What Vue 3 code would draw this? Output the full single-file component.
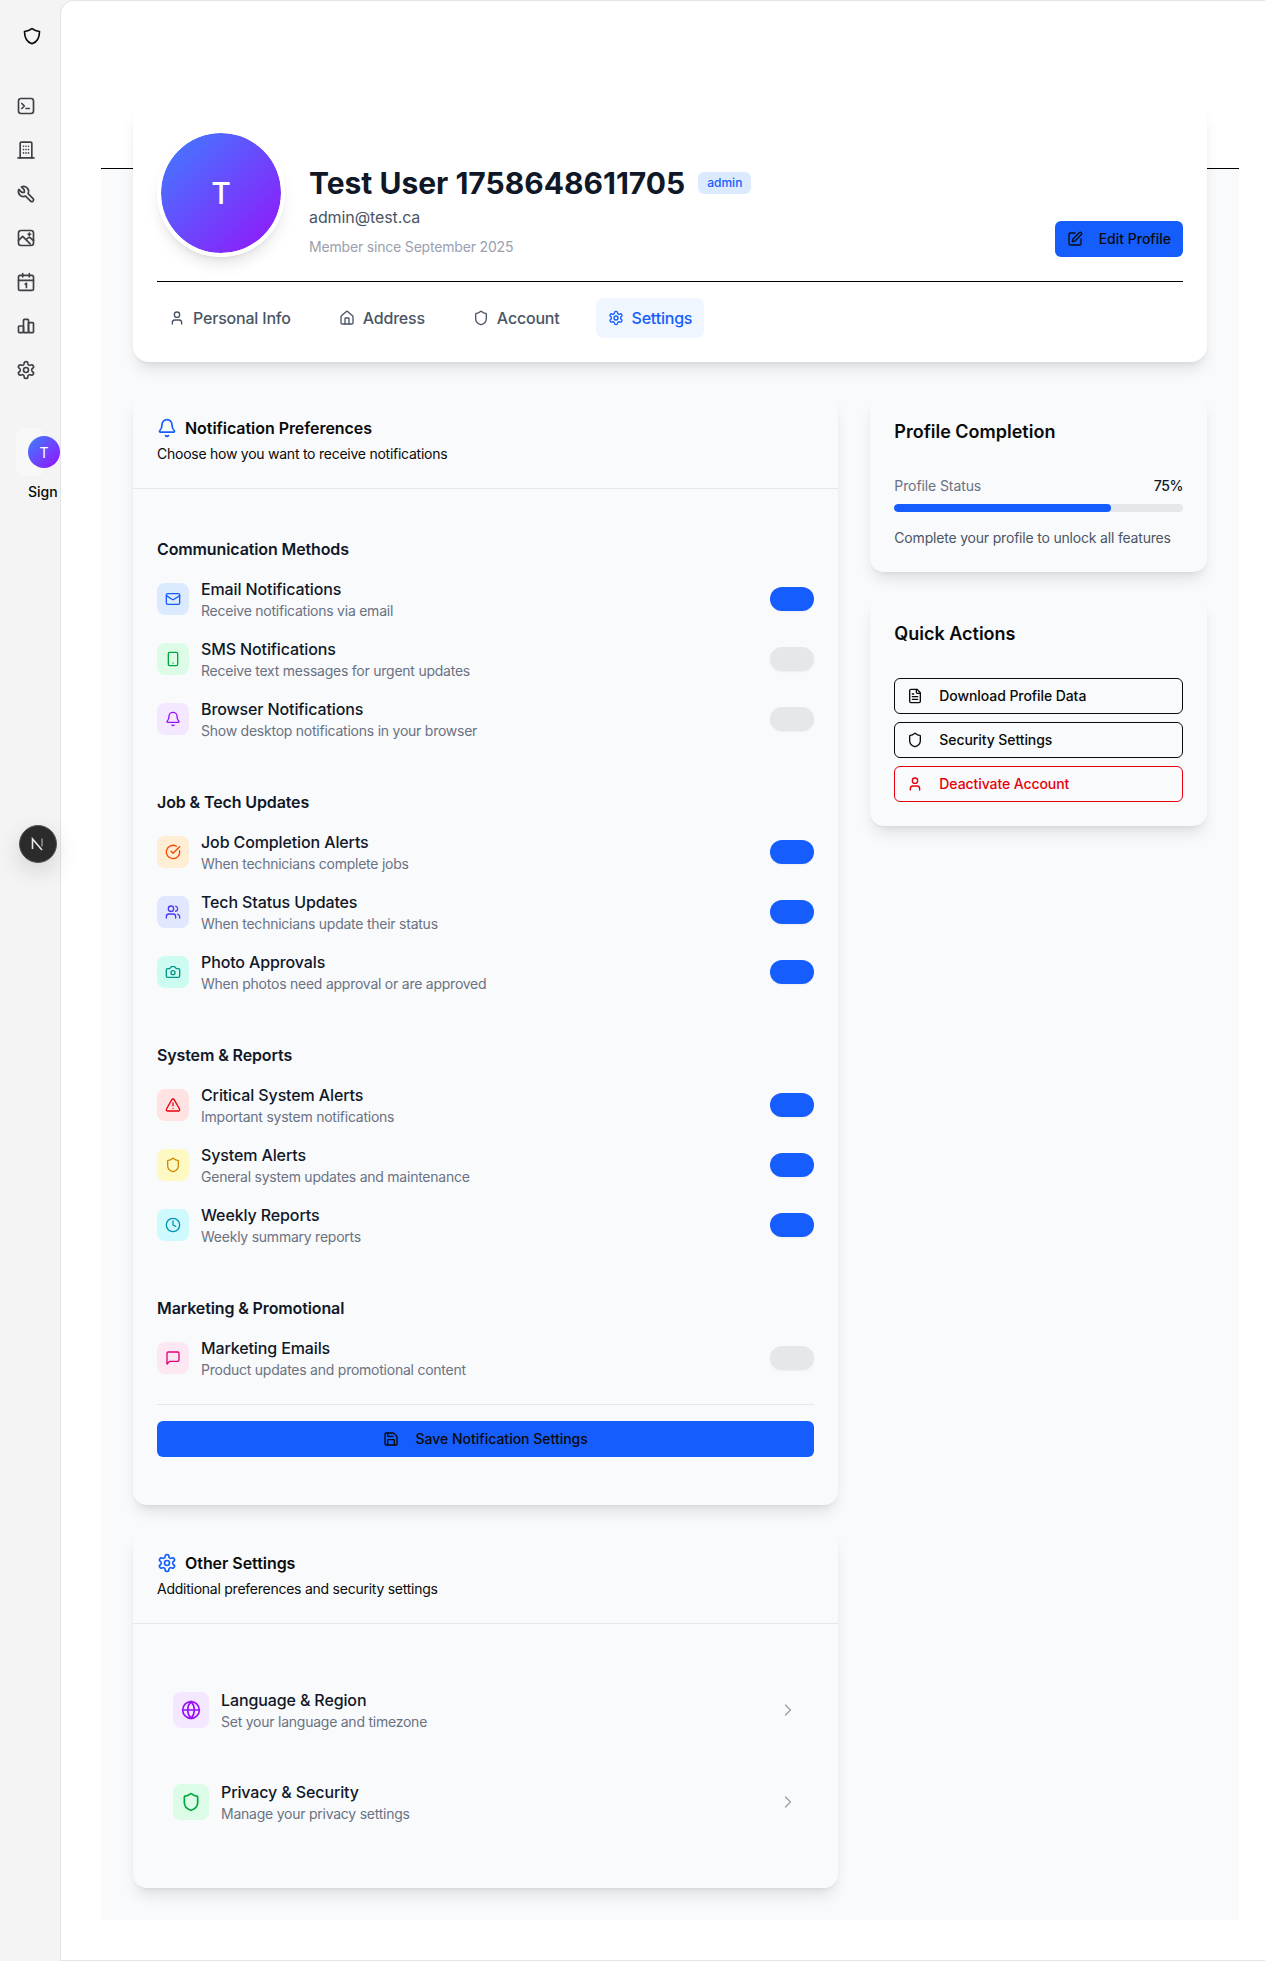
<script setup>
import { h } from 'vue'

const icons = {
  shield: '<path d="M20 13c0 5-3.5 7.5-7.66 8.95a1 1 0 0 1-.67-.01C7.5 20.5 4 18 4 13V6a1 1 0 0 1 1-1c2 0 4.5-1.2 6.24-2.72a1.17 1.17 0 0 1 1.52 0C14.51 3.81 17 5 19 5a1 1 0 0 1 1 1z"/>',
  logo: '<path d="M12 3.2 C9.6 5 6.6 6.2 3 6.6 C3 13.5 5 19 12 21.4 C19 19 21 13.5 21 6.6 C17.4 6.2 14.4 5 12 3.2z"/>',
  terminal: '<rect x="3" y="3" width="18" height="18" rx="3"/><path d="m7 9 3 3-3 3"/><path d="M12 15h4"/>',
  building: '<path d="M2.5 21.5h19"/><path d="M5 21.5V4a1.5 1.5 0 0 1 1.5-1.5h11A1.5 1.5 0 0 1 19 4v17.5"/><path d="M9 7.5h.01M12 7.5h.01M15 7.5h.01M9 11.5h.01M12 11.5h.01M15 11.5h.01M9 15.5h.01M12 15.5h.01M15 15.5h.01"/>',
  tool: '<path d="M7 10h3V7L6.5 3.5a6 6 0 0 1 8 8l6 6a2 2 0 0 1-3 3l-6-6a6 6 0 0 1-8-8L7 10"/>',
  photo: '<rect x="3" y="3" width="18" height="18" rx="3"/><path d="m3 15 5-5 9 9"/><path d="m13 13 3-2 5 4"/><path d="M16 6v3M14.5 7.5h3"/>',
  calendar: '<rect x="3" y="4" width="18" height="18" rx="2"/><path d="M16 2v4M8 2v4M3 10h18"/><path d="m11 14.5 1.5-1v5"/>',
  chart: '<path d="M3 13a1 1 0 0 1 1-1h4a1 1 0 0 1 1 1v6a1 1 0 0 1-1 1H4a1 1 0 0 1-1-1z"/><path d="M15 9a1 1 0 0 1 1-1h4a1 1 0 0 1 1 1v10a1 1 0 0 1-1 1h-4a1 1 0 0 1-1-1z"/><path d="M9 5a1 1 0 0 1 1-1h4a1 1 0 0 1 1 1v14a1 1 0 0 1-1 1h-4a1 1 0 0 1-1-1z"/>',
  settings: '<path d="M12.22 2h-.44a2 2 0 0 0-2 2v.18a2 2 0 0 1-1 1.73l-.43.25a2 2 0 0 1-2 0l-.15-.08a2 2 0 0 0-2.73.73l-.22.38a2 2 0 0 0 .73 2.73l.15.1a2 2 0 0 1 1 1.72v.51a2 2 0 0 1-1 1.74l-.15.09a2 2 0 0 0-.73 2.73l.22.38a2 2 0 0 0 2.73.73l.15-.08a2 2 0 0 1 2 0l.43.25a2 2 0 0 1 1 1.73V20a2 2 0 0 0 2 2h.44a2 2 0 0 0 2-2v-.18a2 2 0 0 1 1-1.73l.43-.25a2 2 0 0 1 2 0l.15.08a2 2 0 0 0 2.73-.73l.22-.39a2 2 0 0 0-.73-2.73l-.15-.08a2 2 0 0 1-1-1.74v-.5a2 2 0 0 1 1-1.74l.15-.09a2 2 0 0 0 .73-2.73l-.22-.38a2 2 0 0 0-2.73-.73l-.15.08a2 2 0 0 1-2 0l-.43-.25a2 2 0 0 1-1-1.73V4a2 2 0 0 0-2-2z"/><circle cx="12" cy="12" r="3"/>',
  user: '<path d="M19 21v-2a4 4 0 0 0-4-4H9a4 4 0 0 0-4 4v2"/><circle cx="12" cy="7" r="4"/>',
  house: '<path d="M15 21v-8a1 1 0 0 0-1-1h-4a1 1 0 0 0-1 1v8"/><path d="M3 10a2 2 0 0 1 .709-1.528l7-5.999a2 2 0 0 1 2.582 0l7 5.999A2 2 0 0 1 21 10v9a2 2 0 0 1-2 2H5a2 2 0 0 1-2-2z"/>',
  pen: '<path d="M12 3H5a2 2 0 0 0-2 2v14a2 2 0 0 0 2 2h14a2 2 0 0 0 2-2v-7"/><path d="M18.375 2.625a1 1 0 0 1 3 3l-9.013 9.014a2 2 0 0 1-.853.505l-2.873.84a.5.5 0 0 1-.62-.62l.84-2.873a2 2 0 0 1 .506-.852z"/>',
  bell: '<path d="M10.268 21a2 2 0 0 0 3.464 0"/><path d="M3.262 15.326A1 1 0 0 0 4 17h16a1 1 0 0 0 .74-1.673C19.41 13.956 18 12.499 18 8A6 6 0 0 0 6 8c0 4.499-1.411 5.956-2.738 7.326"/>',
  mail: '<rect x="2" y="4" width="20" height="16" rx="2"/><path d="m22 7-8.97 5.7a1.94 1.94 0 0 1-2.06 0L2 7"/>',
  phone: '<rect x="5" y="2" width="14" height="20" rx="2"/><path d="M12 18h.01"/>',
  check: '<path d="M21.801 10A10 10 0 1 1 17 3.335"/><path d="m9 11 3 3L22 4"/>',
  users: '<path d="M16 21v-2a4 4 0 0 0-4-4H6a4 4 0 0 0-4 4v2"/><circle cx="9" cy="7" r="4"/><path d="M22 21v-2a4 4 0 0 0-3-3.87"/><path d="M16 3.13a4 4 0 0 1 0 7.75"/>',
  camera: '<path d="M14.5 4h-5L7 7H4a2 2 0 0 0-2 2v9a2 2 0 0 0 2 2h16a2 2 0 0 0 2-2V9a2 2 0 0 0-2-2h-3l-2.5-3z"/><circle cx="12" cy="13" r="3"/>',
  alert: '<path d="m21.73 18-8-14a2 2 0 0 0-3.48 0l-8 14A2 2 0 0 0 4 21h16a2 2 0 0 0 1.73-3"/><path d="M12 9v4"/><path d="M12 17h.01"/>',
  clock: '<circle cx="12" cy="12" r="10"/><path d="M12 6v6l4 2"/>',
  message: '<path d="M21 15a2 2 0 0 1-2 2H7l-4 4V5a2 2 0 0 1 2-2h14a2 2 0 0 1 2 2z"/>',
  save: '<path d="M15.2 3a2 2 0 0 1 1.4.6l3.8 3.8a2 2 0 0 1 .6 1.4V19a2 2 0 0 1-2 2H5a2 2 0 0 1-2-2V5a2 2 0 0 1 2-2z"/><path d="M17 21v-7a1 1 0 0 0-1-1H8a1 1 0 0 0-1 1v7"/><path d="M7 3v4a1 1 0 0 0 1 1h7"/>',
  globe: '<circle cx="12" cy="12" r="10"/><path d="M12 2a14.5 14.5 0 0 0 0 20 14.5 14.5 0 0 0 0-20"/><path d="M2 12h20"/>',
  chevron: '<path d="m9 18 6-6-6-6"/>',
  file: '<path d="M15 2H6a2 2 0 0 0-2 2v16a2 2 0 0 0 2 2h12a2 2 0 0 0 2-2V7Z"/><path d="M14 2v4a2 2 0 0 0 2 2h4"/><path d="M10 9H8"/><path d="M16 13H8"/><path d="M16 17H8"/>'
}

const Icon = (p) => h('svg', {
  width: p.size || 16,
  height: p.size || 16,
  viewBox: '0 0 24 24',
  fill: 'none',
  stroke: 'currentColor',
  'stroke-width': p.sw || 2,
  'stroke-linecap': 'round',
  'stroke-linejoin': 'round',
  style: { flex: 'none', display: 'block' },
  innerHTML: icons[p.name]
})
Icon.props = ['name', 'size', 'sw']

const navIcons = ['terminal', 'building', 'tool', 'photo', 'calendar', 'chart', 'settings']

const tabs = [
  { label: 'Personal Info', icon: 'user' },
  { label: 'Address', icon: 'house' },
  { label: 'Account', icon: 'shield' },
  { label: 'Settings', icon: 'settings', active: true }
]

const groups = [
  { title: 'Communication Methods', items: [
    { t: 'Email Notifications', d: 'Receive notifications via email', icon: 'mail', c: '#155dfc', bg: '#dbeafe', on: true },
    { t: 'SMS Notifications', d: 'Receive text messages for urgent updates', icon: 'phone', c: '#00a63e', bg: '#dcfce7', on: false },
    { t: 'Browser Notifications', d: 'Show desktop notifications in your browser', icon: 'bell', c: '#9810fa', bg: '#f3e8ff', on: false }
  ] },
  { title: 'Job & Tech Updates', items: [
    { t: 'Job Completion Alerts', d: 'When technicians complete jobs', icon: 'check', c: '#f54900', bg: '#ffedd4', on: true },
    { t: 'Tech Status Updates', d: 'When technicians update their status', icon: 'users', c: '#4f39f6', bg: '#e0e7ff', on: true },
    { t: 'Photo Approvals', d: 'When photos need approval or are approved', icon: 'camera', c: '#009689', bg: '#cbfbf1', on: true }
  ] },
  { title: 'System & Reports', items: [
    { t: 'Critical System Alerts', d: 'Important system notifications', icon: 'alert', c: '#e7000b', bg: '#ffe2e2', on: true },
    { t: 'System Alerts', d: 'General system updates and maintenance', icon: 'shield', c: '#d08700', bg: '#fef9c2', on: true },
    { t: 'Weekly Reports', d: 'Weekly summary reports', icon: 'clock', c: '#0092b8', bg: '#cefafe', on: true }
  ] },
  { title: 'Marketing & Promotional', items: [
    { t: 'Marketing Emails', d: 'Product updates and promotional content', icon: 'message', c: '#e60076', bg: '#fce7f3', on: false }
  ] }
]

const others = [
  { t: 'Language & Region', d: 'Set your language and timezone', icon: 'globe', c: '#9810fa', bg: '#f3e8ff' },
  { t: 'Privacy & Security', d: 'Manage your privacy settings', icon: 'shield', c: '#00a63e', bg: '#dcfce7' }
]

const actions = [
  { t: 'Download Profile Data', icon: 'file' },
  { t: 'Security Settings', icon: 'shield' },
  { t: 'Deactivate Account', icon: 'user', danger: true }
]
</script>

<template>
  <div class="shell">
    <aside class="sidebar">
      <div class="logo"><Icon name="logo" :size="20" /></div>
      <nav class="nav">
        <div v-for="n in navIcons" :key="n" class="nav-item"><Icon :name="n" :size="20" /></div>
      </nav>
      <div class="side-user">
        <div class="side-avatar">T</div>
      </div>
      <div class="sign">Sign</div>
    </aside>

    <main class="main">
      <div class="topbar"></div>
      <div class="content">
        <section class="hero">
          <div class="hero-row">
            <div class="avatar">T</div>
            <div class="hero-info">
              <div class="name-row">
                <h1>Test User 1758648611705</h1>
                <span class="badge">admin</span>
              </div>
              <div class="email">admin@test.ca</div>
              <div class="member">Member since September 2025</div>
            </div>
            <button class="btn"><Icon name="pen" />Edit Profile</button>
          </div>
          <div class="tabs">
            <div v-for="t in tabs" :key="t.label" class="tab" :class="{ active: t.active }">
              <Icon :name="t.icon" />{{ t.label }}
            </div>
          </div>
        </section>

        <div class="grid">
          <div class="col">
            <section class="card">
              <header class="card-head">
                <div class="card-title"><span class="blue"><Icon name="bell" :size="20" /></span>Notification Preferences</div>
                <p>Choose how you want to receive notifications</p>
              </header>
              <div class="card-body">
                <div class="groups">
                  <div v-for="g in groups" :key="g.title" class="group">
                    <h3>{{ g.title }}</h3>
                    <div class="rows">
                      <div v-for="i in g.items" :key="i.t" class="row">
                        <div class="row-left">
                          <span class="tile" :style="{ background: i.bg, color: i.c }"><Icon :name="i.icon" /></span>
                          <div>
                            <div class="row-title">{{ i.t }}</div>
                            <div class="row-desc">{{ i.d }}</div>
                          </div>
                        </div>
                        <span class="toggle" :class="{ on: i.on }"></span>
                      </div>
                    </div>
                  </div>
                </div>
                <div class="save-wrap">
                  <button class="btn save"><Icon name="save" />Save Notification Settings</button>
                </div>
              </div>
            </section>

            <section class="card">
              <header class="card-head">
                <div class="card-title"><span class="blue"><Icon name="settings" :size="20" /></span>Other Settings</div>
                <p>Additional preferences and security settings</p>
              </header>
              <div class="card-body other">
                <div v-for="o in others" :key="o.t" class="other-row">
                  <div class="row-left">
                    <span class="tile big" :style="{ background: o.bg, color: o.c }"><Icon :name="o.icon" :size="20" /></span>
                    <div>
                      <div class="row-title">{{ o.t }}</div>
                      <div class="row-desc">{{ o.d }}</div>
                    </div>
                  </div>
                  <span class="chev"><Icon name="chevron" :size="20" :sw="1.6" /></span>
                </div>
              </div>
            </section>
          </div>

          <div class="col">
            <section class="card side">
              <h2>Profile Completion</h2>
              <div class="status"><span>Profile Status</span><b>75%</b></div>
              <div class="bar"><div class="fill" :style="{ width: '75%' }"></div></div>
              <p class="hint">Complete your profile to unlock all features</p>
            </section>
            <section class="card side">
              <h2>Quick Actions</h2>
              <div class="actions">
                <button v-for="a in actions" :key="a.t" class="action" :class="{ danger: a.danger }">
                  <Icon :name="a.icon" />{{ a.t }}
                </button>
              </div>
            </section>
          </div>
        </div>
      </div>
    </main>

    <div class="next-badge">
      <svg width="18" height="18" viewBox="0 0 18 18" fill="none">
        <path d="M3.5 14V4l9.5 11" stroke="#e8e8e8" stroke-width="1.6" />
        <path d="M13 3.5v8" stroke="#9a9a9a" stroke-width="1.4" />
      </svg>
    </div>
  </div>
</template>

<style>
html, body { margin: 0; background: #fff; }
</style>

<style scoped>
* { box-sizing: border-box; }
.shell {
  display: flex;
  min-height: 1961px;
  font-family: Inter, "Liberation Sans", sans-serif;
  background: #f4f4f5;
  color: #0a0a0a;
  position: relative;
}
.sidebar { width: 60px; flex: none; position: relative; }
.logo { height: 28px; margin-top: 22px; padding-left: 22px; color: #0a0a0a; display: flex; align-items: center; }
.nav { margin-top: 34px; }
.nav-item { height: 44px; padding-left: 16px; display: flex; align-items: center; color: #3f3f46; }
.side-user { margin: 36px 0 0 16px; width: 28px; height: 48px; background: #f8f8f9; border-radius: 8px; position: relative; }
.side-avatar {
  position: absolute; left: 12px; top: 8px; width: 32px; height: 32px; border-radius: 50%;
  background: linear-gradient(135deg, #3b82ff, #9810fa); color: #fff; font-size: 14px;
  display: flex; align-items: center; justify-content: center;
}
.sign { margin: 6px 0 0 28px; font-size: 14px; line-height: 20px; font-weight: 500; }
.next-badge {
  position: absolute; left: 19px; top: 825px; width: 38px; height: 38px; border-radius: 50%;
  background: #2b2b2b; border: 1px solid #555; display: flex; align-items: center; justify-content: center;
  box-shadow: 0 8px 24px rgba(0,0,0,.14);
}
.main {
  flex: 1; min-width: 0; background: #fff; border: 1px solid #e4e4e7; border-right: 0;
  border-top-left-radius: 14px; padding: 0 26px 40px 40px; display: flex; flex-direction: column;
}
.topbar { border-bottom: 1px solid #000; flex: none; box-sizing: content-box; height: 167px; }
.content { flex: 1; background: #f8fafc; padding: 0 32px 32px; }
.hero {
  margin-top: -65px; background: #fff; border-radius: 16px; padding: 25px 24px 24px;
  box-shadow: 0 10px 15px -3px rgba(0,0,0,.1), 0 4px 6px -4px rgba(0,0,0,.1);
  position: relative;
}
.hero-row { display: flex; align-items: flex-end; padding-bottom: 24px; border-bottom: 1px solid #000; }
.avatar {
  width: 128px; height: 128px; border-radius: 50%; border: 4px solid #fff; flex: none;
  background: linear-gradient(135deg, #3b82ff, #9810fa) border-box; color: #fff;
  font-size: 30px; font-weight: 500; display: flex; align-items: center; justify-content: center;
  box-shadow: 0 10px 15px -3px rgba(0,0,0,.1), 0 4px 6px -4px rgba(0,0,0,.1);
  background-clip: padding-box;
}
.hero-info { margin-left: 24px; flex: 1; }
.name-row { display: flex; align-items: center; gap: 13px; margin-bottom: 4px; }
h1 { margin: 0; font-size: 30px; line-height: 36px; font-weight: 700; color: #101828; }
.badge { background: #dbeafe; color: #155dfc; font-size: 12px; line-height: 16px; font-weight: 500; padding: 3px 9px; border-radius: 6px; }
.email { font-size: 16px; line-height: 24px; color: #4a5565; margin-bottom: 8px; letter-spacing: -.1px; }
.member { font-size: 14px; line-height: 20px; color: #99a1af; letter-spacing: -.18px; }
.btn {
  border: 0; background: #155dfc; color: #0a0a0a; font: 500 14px/20px Inter, sans-serif; border-radius: 6px;
  height: 36px; display: flex; align-items: center; justify-content: center; gap: 16px; padding: 0 12px;
}
.tabs { display: flex; gap: 24px; padding-top: 16px; }
.tab {
  height: 40px; display: flex; align-items: center; gap: 8px; padding: 0 12px; border-radius: 8px;
  color: #4a5565; font-size: 16px; font-weight: 500; letter-spacing: -.2px;
}
.tab.active { background: #eff6ff; color: #155dfc; }
.grid { display: grid; grid-template-columns: repeat(3, minmax(0, 1fr)); gap: 32px; margin-top: 32px; align-items: start; }
.col { display: flex; flex-direction: column; gap: 24px; }
.col:first-child { grid-column: span 2; }
.card {
  background: #f9fafc; border-radius: 14px;
  box-shadow: 0 10px 15px -3px rgba(0,0,0,.1), 0 4px 6px -4px rgba(0,0,0,.1);
}
.card-head { padding: 24px; border-bottom: 1px solid #e5e7eb; }
.card-title { display: flex; align-items: center; gap: 8px; font-size: 16px; line-height: 20px; font-weight: 600; letter-spacing: -.05px; }
.card-head p { margin: 6px 0 0; font-size: 14px; line-height: 20px; letter-spacing: -.25px; }
.blue { color: #155dfc; }
.card-body { padding: 48px 24px; }
.groups { display: flex; flex-direction: column; gap: 49px; margin-bottom: 24px; }
h3 { margin: 0 0 16px; font-size: 16px; line-height: 24px; font-weight: 600; color: #101828; letter-spacing: -.12px; }
.rows { display: flex; flex-direction: column; gap: 16px; }
.row { display: flex; align-items: center; justify-content: space-between; }
.row-left { display: flex; align-items: center; gap: 12px; }
.tile { width: 32px; height: 32px; border-radius: 8px; display: flex; align-items: center; justify-content: center; flex: none; }
.tile.big { width: 36px; height: 36px; }
.row-title { font-size: 16px; line-height: 24px; font-weight: 500; color: #101828; letter-spacing: -.12px; }
.row-desc { font-size: 14px; line-height: 20px; color: #6a7282; letter-spacing: -.24px; }
.toggle { width: 44px; height: 24px; border-radius: 12px; background: #e5e7eb; box-shadow: 0 1px 2px rgba(0,0,0,.05); }
.toggle.on { background: #155dfc; }
.save-wrap { border-top: 1px solid #e5e7eb; padding-top: 16px; }
.save { width: 100%; }
.card-body.other { display: flex; flex-direction: column; gap: 16px; }
.other-row { display: flex; align-items: center; justify-content: space-between; padding: 16px; }
.chev { color: #99a1af; }
.side { padding: 24px; }
h2 { margin: 0; font-size: 18px; line-height: 28px; font-weight: 600; }
.status { display: flex; justify-content: space-between; margin-top: 30px; font-size: 14px; line-height: 20px; color: #6a7282; letter-spacing: -.1px; }
.status b { font-weight: 500; color: #101828; letter-spacing: -.4px; }
.bar { height: 8px; border-radius: 4px; background: #e5e7eb; margin-top: 8px; overflow: hidden; }
.fill { height: 100%; background: #155dfc; border-radius: 4px; }
.hint { margin: 16px 0 0; font-size: 14px; line-height: 20px; color: #4a5565; letter-spacing: -.19px; }
.actions { margin-top: 30px; display: flex; flex-direction: column; gap: 8px; }
.action {
  height: 36px; border: 1px solid #0a0a0a; border-radius: 6px; background: transparent; color: #0a0a0a;
  font: 500 14px/20px Inter, sans-serif; display: flex; align-items: center; gap: 16px; padding: 0 12px;
  letter-spacing: -.08px;
}
.action.danger { border-color: #e7000b; color: #e7000b; }
</style>
